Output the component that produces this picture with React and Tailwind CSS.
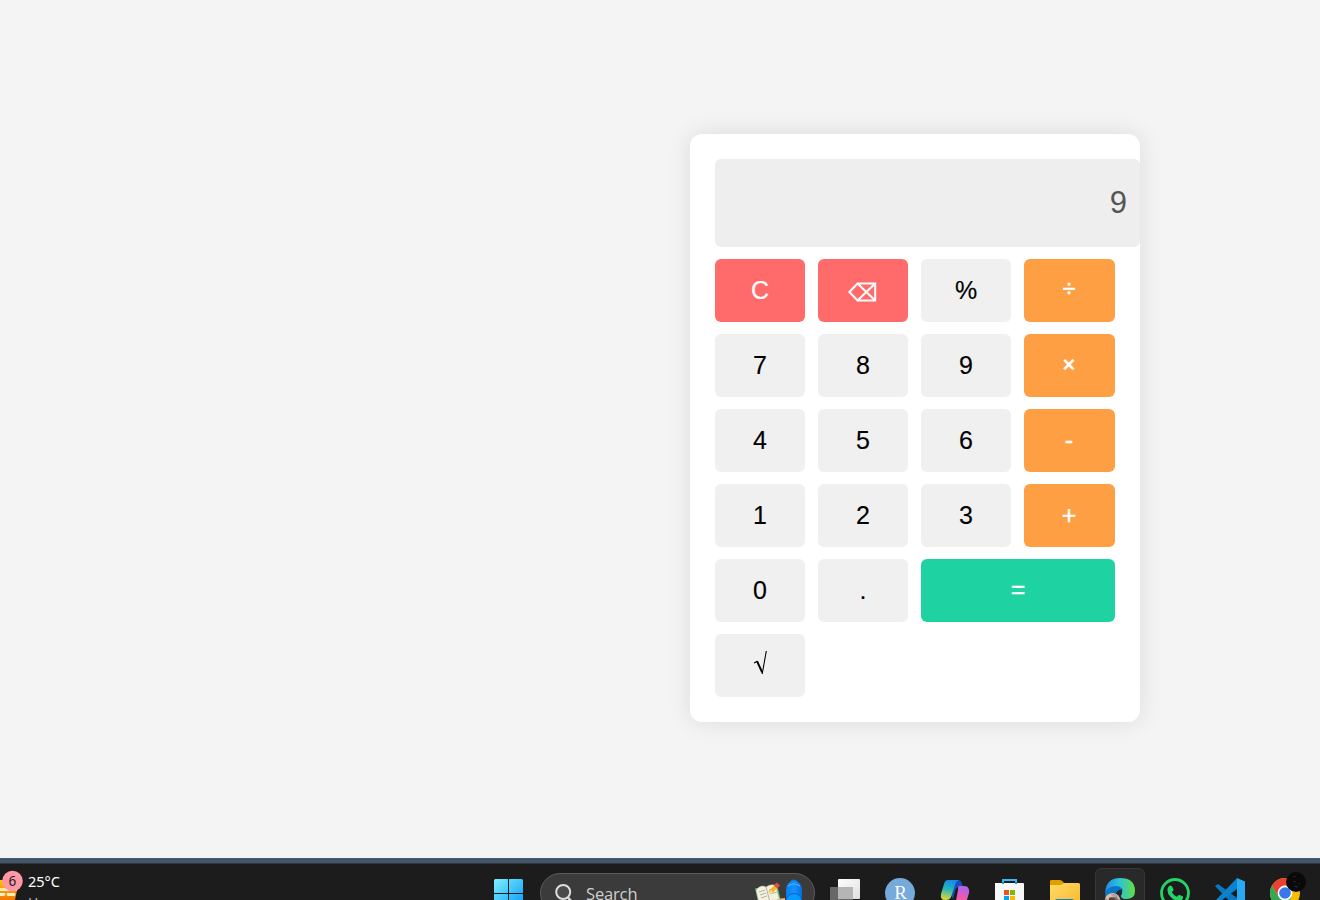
import React from "react";

const key = "flex h-[63px] items-center justify-center rounded-[6px] text-[25px] leading-none";
const plain = "bg-[#f0f0f0] text-black";
const red = "bg-[#ff6b6b] text-white";
const orange = "bg-[#ff9f43] text-white";

const keys = [
  ["C", red], ["⌫", red], ["%", plain], ["÷", orange],
  ["7", plain], ["8", plain], ["9", plain], ["×", orange],
  ["4", plain], ["5", plain], ["6", plain], ["-", orange],
  ["1", plain], ["2", plain], ["3", plain], ["+", orange],
  ["0", plain], [".", plain], ["=", "col-span-2 bg-[#1fd2a1] text-white"],
  ["√", plain],
];

function KeyLabel({ label }) {
  if (label === "⌫")
    return (
      <svg width="30" height="20" viewBox="0 0 30 20" className="mt-[3px] mr-[2px]" fill="none" stroke="white" strokeWidth="2" aria-label="Backspace">
        <path d="M10.5 1.6H28.2V18.4H10.5L2.4 10Z M10.5 1.6L28.2 18.4 M28.2 1.6L10.5 18.4" />
      </svg>
    );
  if (label === "√")
    return (
      <svg width="15" height="26" viewBox="0 0 15 26" className="mb-[5px]" fill="none" stroke="black" aria-label="Square root">
        <path d="M1 13L4.3 11.2" strokeWidth="1.2" />
        <path d="M4 11.2L9.2 22.3" strokeWidth="2" />
        <path d="M9.2 24L13.3 1" strokeWidth="1.1" />
      </svg>
    );
  if (label === "÷") return <b className="mr-px mb-[2px] text-[23px] font-normal [-webkit-text-stroke:0.6px_white]">{label}</b>;
  if (label === "×") return <b className="mr-px mb-[2px] text-[22px]">{label}</b>;
  if (label === "=") return <span className="mb-[2px] [-webkit-text-stroke:0.3px_white]">{label}</span>;
  if (label === "+" || label === "-") return <span className="mr-px [-webkit-text-stroke:0.4px_white]">{label}</span>;
  return <span className="[-webkit-text-stroke:0.15px_currentColor]">{label}</span>;
}

function Calculator() {
  return (
    <section className="h-[588px] w-[450px] rounded-[12px] bg-white p-[25px] shadow-[0_0_25px_rgba(0,0,0,0.1)]">
      <div className="flex h-[88px] w-[425px] items-center justify-end rounded-[6px] bg-[#eeeeee] pr-[13px] pb-[2px] text-[31px] leading-none text-[#555555]">
        9
      </div>
      <div className="mt-[12px] grid grid-cols-[90px_90px_90px_91px] gap-x-[13px] gap-y-[12px]">
        {keys.map(([label, color]) => (
          <button key={label} className={`${key} ${color}`}>
            <KeyLabel label={label} />
          </button>
        ))}
      </div>
    </section>
  );
}

function Weather() {
  return (
    <div className="flex w-[481px] font-['Noto_Sans',sans-serif]">
      <svg width="28" height="36" viewBox="0 0 28 36" className="shrink-0">
        <defs>
          <linearGradient id="sun" x1="0" x2="0" y1="0" y2="1">
            <stop stopColor="#ffc400" /><stop offset="1" stopColor="#f07808" />
          </linearGradient>
        </defs>
        <path d="M0 16H19L15 36H0Z" fill="url(#sun)" />
        <path d="M0 24H18L17 27H0Z" fill="#ffe9b0" />
        <path d="M0 30.5H4M8 30.5H14" stroke="#ffedc6" strokeWidth="2.8" strokeLinecap="round" />
        <circle cx="12.5" cy="17" r="10.3" fill="#ff98a5" />
        <text x="12.3" y="21.8" textAnchor="middle" fontSize="13.5" fill="#1c1c1c">6</text>
      </svg>
      <div className="text-[14.5px] leading-[19px] text-white">
        <div className="mt-[8px]">25°C</div>
        <div className="mt-[2px] text-[14px] text-[#b8b8b8]">Haze</div>
      </div>
    </div>
  );
}

function StartIcon() {
  return (
    <svg width="55" height="58" viewBox="0 0 55 58">
      <defs>
        <linearGradient id="win" x1="0" y1="0" x2="1" y2="1" >
          <stop stopColor="#7df1ff" /><stop offset="1" stopColor="#0798f5" />
        </linearGradient>
      </defs>
      <g transform="translate(13 15)">
        <path d="M1.5 0H14V14H0V1.5Q0 0 1.5 0M15 0H27.5Q29 0 29 1.5V14H15ZM0 15H14V29H0ZM15 15H29V29H15Z" fill="url(#win)" />
      </g>
    </svg>
  );
}

function SearchBox() {
  return (
    <div className="mt-[9px] ml-[4px] flex h-[40px] w-[275px] overflow-hidden rounded-full border border-[#5b5b5b] bg-[#3b3b3b]">
      <svg width="46" height="38" viewBox="0 0 46 38" fill="none">
        <circle cx="22.2" cy="18" r="7" stroke="#dedede" strokeWidth="2" fill="#4b4b4b" />
        <path d="M27 23.5L31.5 28.5" stroke="#dedede" strokeWidth="2.3" />
      </svg>
      <span className="-ml-[1px] flex-1 pt-[9px] font-['Open_Sans',sans-serif] text-[16.5px] leading-[22px] tracking-[-0.15px] text-[#d0d0d0]">Search</span>
      <svg width="60" height="38" viewBox="0 0 60 38">
        <defs>
          <linearGradient id="bag" x1="0" x2="1">
            <stop stopColor="#087bed" /><stop offset=".5" stopColor="#1394ff" /><stop offset="1" stopColor="#0969df" />
          </linearGradient>
        </defs>
        <path d="M1 14L5 31H28L24 14Z" fill="#40ba54" />
        <path d="M2 16Q7 10 12 13Q18 9 22 12L26 28Q19 24 15 28Q10 25 5 29Z" fill="#f5f1df" stroke="#bdb9ab" strokeWidth=".5" />
        <path d="M12 13L16 28M5 18L11 16M6 21L12 19M15 16L21 14M16 20L23 18M7 24L13 22" stroke="#9da29b" strokeWidth=".8" />
        <path d="M16 19L23 11" stroke="#f9b51c" strokeWidth="4" />
        <path d="M21.5 13L24.5 10" stroke="#e64d43" strokeWidth="4.5" />
        <path d="M15 20L17 16L19 19Z" fill="#ffe0b4" />
        <path d="M23 25L31 24V38H23Z" fill="#e5b47e" />
        <path d="M37 8Q39 5 43 8" fill="none" stroke="#087ee5" strokeWidth="2" />
        <path d="M32 17Q32 7 40 7Q48 7 48 17V38H32Z" fill="url(#bag)" />
        <path d="M34 12Q40 8 46 12" fill="none" stroke="#41b6ff" strokeWidth="1.2" />
        <ellipse cx="40" cy="26" rx="7.5" ry="6.5" fill="#079bff" stroke="#0760cf" strokeWidth="1" />
      </svg>
    </div>
  );
}

function TaskViewIcon() {
  return (
    <svg width="55" height="58" viewBox="0 0 55 58">
      <defs><linearGradient id="tv" x1="0" y1="0" x2="1" y2="1"><stop stopColor="#fff" /><stop offset="1" stopColor="#dedede" /></linearGradient></defs>
      <rect x="20" y="15" width="22" height="20" rx="1" fill="url(#tv)" />
      <rect x="12" y="23" width="23" height="22" rx="1" fill="#777" fillOpacity=".82" />
      <path d="M20 23H34Q35 23 35 24V35H20Z" fill="#b5b5b5" />
    </svg>
  );
}

function RIcon() {
  return (
    <svg width="55" height="58" viewBox="0 0 55 58">
      <circle cx="27" cy="29" r="15" fill="#75aadb" />
      <text x="27.5" y="35" textAnchor="middle" fontFamily="Liberation Serif, serif" fontSize="19" fill="white">R</text>
    </svg>
  );
}

function CopilotIcon() {
  return (
    <svg width="55" height="58" viewBox="0 0 55 58">
      <defs>
        <linearGradient id="cpl" x1=".4" y1="0" x2=".2" y2="1"><stop stopColor="#168bea" /><stop offset=".45" stopColor="#27b8b6" /><stop offset="1" stopColor="#e5db31" /></linearGradient>
        <linearGradient id="cpr" x1=".6" y1="0" x2=".3" y2="1"><stop stopColor="#ab63ef" /><stop offset=".6" stopColor="#f45aa7" /><stop offset="1" stopColor="#ff9271" /></linearGradient>
      </defs>
      <path d="M25 16H30Q33 16 34 20L35 23H31Q28 23 27 27L25 35L21 27Z" fill="#194cbe" />
      <path d="M20 16H31Q28 17 27 21L23 33Q22 36 18 36H17Q12 36 13 30L16 20Q17 16 20 16Z" fill="url(#cpl)" />
      <path d="M31 22H36Q42 22 41 29L38 39Q36 43 32 43H24Q27 42 28 37L30 26Q30 22 31 22Z" fill="url(#cpr)" />
    </svg>
  );
}

function StoreIcon() {
  return (
    <svg width="55" height="58" viewBox="1 0 55 58">
      <path d="M21 20V16H34V20" fill="none" stroke="#35baf3" strokeWidth="2" />
      <path d="M13 19H41Q42 19 42 20V40Q42 44 38 44H17Q13 44 13 40Z" fill="#f6f7f8" />
      <path d="M21 18V20M34 18V20" stroke="#159bd8" strokeWidth="2" />
      <path d="M22 26H27V31H22Z" fill="#f25022" /><path d="M28 26H33V31H28Z" fill="#7fba00" />
      <path d="M22 32H27V37H22Z" fill="#00a4ef" /><path d="M28 32H33V37H28Z" fill="#ffb900" />
    </svg>
  );
}

function FolderIcon() {
  return (
    <svg width="55" height="58" viewBox="0 0 55 58">
      <defs><linearGradient id="fold" x1="0" y1="0" x2="1" y2="1"><stop stopColor="#ffdb68" /><stop offset="1" stopColor="#f9b92b" /></linearGradient></defs>
      <path d="M12 17Q12 16 13.5 16H22Q24 16 26 19H40V25H12Z" fill="#dda000" />
      <path d="M12 21H23L26 19H40.5Q42 19 42 20.5V41H12Z" fill="url(#fold)" />
      <path d="M17 41V37Q17 35 19 35H34Q36 35 36 37V41Z" fill="#1681bd" />
    </svg>
  );
}

function EdgeIcon() {
  return (
    <div className="mt-[4px] mr-[3px] ml-[2px] h-[50px] w-[50px] rounded-[6px] border border-[#373737] bg-[#292929]">
      <svg width="48" height="48" viewBox="0 0 48 48">
        <defs>
          <linearGradient id="edgeTop" x1="0" x2="1"><stop stopColor="#2387df" /><stop offset=".45" stopColor="#2bc1df" /><stop offset="1" stopColor="#62df42" /></linearGradient>
          <clipPath id="avatar"><circle cx="16.5" cy="32" r="8" /></clipPath>
        </defs>
        <path d="M9 24Q10 9 24 9Q39 9 39 22Q39 31 28 30Q23 28 26 25Q28 17 18 18Q13 18 9 24Z" fill="url(#edgeTop)" />
        <path d="M9 24Q12 17 20 17Q25 17 27 21Q23 19 20 24Q18 29 21 37Q9 34 9 24Z" fill="#0877ca" />
        <g clipPath="url(#avatar)"><rect x="8" y="24" width="17" height="16" fill="#8b7770" /><path d="M9 29Q13 22 21 25L25 31L22 30L20 27L15 29L12 32Z" fill="#d5bcb0" /><path d="M13 29Q17 27 20 31V36H12Z" fill="#5e3f37" /><path d="M15 25L20 25L22 28L17 28Z" fill="#aaa4a2" /></g>
      </svg>
    </div>
  );
}

function WhatsAppIcon() {
  return (
    <svg width="55" height="58" viewBox="0.5 0 55 58">
      <circle cx="27.5" cy="29" r="13.5" fill="none" stroke="#25d366" strokeWidth="2.8" />
      <path d="M22.5 21.5L24.3 22L26.2 26L24.4 28.3Q26 31.3 29.3 32.8L31.6 30.7L35.5 32.6Q36 36 32 37Q28 38 23.2 33Q18.8 28.5 20.3 24Q21 22 22.5 21.5Z" fill="#25d366" />
    </svg>
  );
}

function CodeIcon() {
  return (
    <svg width="55" height="58" viewBox="1 0 55 58">
      <path d="M13 22L16 20L43 40V44L35 45Z" fill="#0879c5" />
      <path d="M13 37L35 14V25L16 39Z" fill="#0b82ce" />
      <path d="M35 14L43 17.5V41L35 45Z" fill="#29a9f2" />
    </svg>
  );
}

function ChromeIcon() {
  return (
    <svg width="62" height="58" viewBox="0.5 0 62 58">
      <circle cx="27.5" cy="29" r="15" fill="#fbbc05" />
      <path d="M14.5 21.5A15 15 0 0 1 40.5 21.5H27.5L21 33Z" fill="#e94235" />
      <path d="M14.5 21.5A15 15 0 0 0 27.5 44L34 33L21 33Z" fill="#34a853" />
      <circle cx="27.5" cy="29" r="7.4" fill="white" />
      <circle cx="27.5" cy="29" r="5.8" fill="#3878e8" />
      <circle cx="38.5" cy="18" r="10" fill="#090909" />
      <path d="M36 13L38 12M36 17L38 18M42 19L42 20" fill="none" stroke="#3b2a1e" strokeWidth="1.1" />
      <path d="M37 22L40 23" fill="none" stroke="#222625" strokeWidth="1.6" />
    </svg>
  );
}

function Taskbar() {
  return (
    <footer className="h-[36px] overflow-hidden bg-[#1c1c1c]">
      <div className="flex h-[58px] w-[1320px] items-start">
        <Weather />
        <StartIcon />
        <SearchBox />
        <div className="ml-[3px] flex items-start">
          <TaskViewIcon /><RIcon /><CopilotIcon /><StoreIcon /><FolderIcon />
          <EdgeIcon /><WhatsAppIcon /><CodeIcon /><ChromeIcon />
        </div>
      </div>
    </footer>
  );
}

export default function App() {
  return (
    <div className="flex h-[900px] w-[1320px] flex-col overflow-hidden bg-[#f4f4f4] font-['Liberation_Sans',sans-serif]">
      <main className="flex h-[858px] shrink-0 items-start justify-end pt-[134px] pr-[180px]">
        <Calculator />
      </main>
      <div className="h-[6px] shrink-0 border-b border-[#34373a] bg-[#43566b]" />
      <Taskbar />
    </div>
  );
}
